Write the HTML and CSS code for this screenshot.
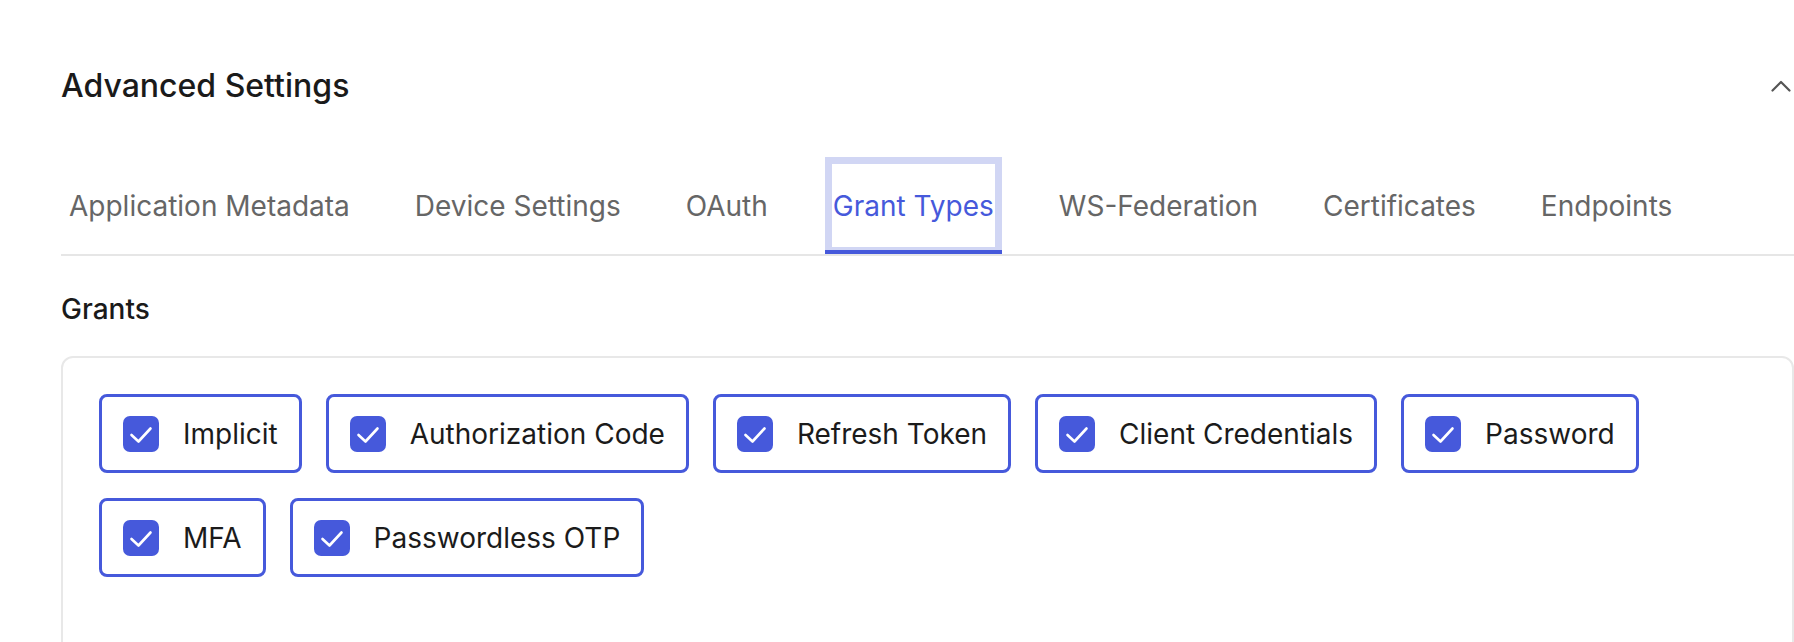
FILE: index.html
```html
<!DOCTYPE html>
<html lang="en">
<head>
<meta charset="utf-8">
<title>Advanced Settings</title>
<link rel="stylesheet" href="styles.css">
</head>
<body>
<main class="page">
  <header class="section-header">
    <h2 class="section-title">Advanced Settings</h2>
    <button class="collapse-btn" type="button" aria-label="Collapse">
      <svg width="20" height="12" viewBox="0 0 20 12" aria-hidden="true">
        <path d="M1.5 10.5 L10 2 L18.5 10.5" fill="none" stroke="#555" stroke-width="2.2" stroke-linecap="round" stroke-linejoin="round"/>
      </svg>
    </button>
  </header>

  <nav class="tabs">
    <span class="tab">Application Metadata</span>
    <span class="tab">Device Settings</span>
    <span class="tab">OAuth</span>
    <span class="tab tab-active">Grant Types</span>
    <span class="tab">WS-Federation</span>
    <span class="tab">Certificates</span>
    <span class="tab">Endpoints</span>
  </nav>

  <h3 class="group-label">Grants</h3>

  <section class="card">
    <div class="chips">
      <label class="chip"><span class="box"><svg viewBox="0 0 36 36"><path d="M8.5 19 L15.5 25.5 L27.5 12.5"/></svg></span><span class="chip-text">Implicit</span></label>
      <label class="chip"><span class="box"><svg viewBox="0 0 36 36"><path d="M8.5 19 L15.5 25.5 L27.5 12.5"/></svg></span><span class="chip-text">Authorization Code</span></label>
      <label class="chip"><span class="box"><svg viewBox="0 0 36 36"><path d="M8.5 19 L15.5 25.5 L27.5 12.5"/></svg></span><span class="chip-text">Refresh Token</span></label>
      <label class="chip"><span class="box"><svg viewBox="0 0 36 36"><path d="M8.5 19 L15.5 25.5 L27.5 12.5"/></svg></span><span class="chip-text">Client Credentials</span></label>
      <label class="chip"><span class="box"><svg viewBox="0 0 36 36"><path d="M8.5 19 L15.5 25.5 L27.5 12.5"/></svg></span><span class="chip-text">Password</span></label>
      <label class="chip"><span class="box"><svg viewBox="0 0 36 36"><path d="M8.5 19 L15.5 25.5 L27.5 12.5"/></svg></span><span class="chip-text">MFA</span></label>
      <label class="chip"><span class="box"><svg viewBox="0 0 36 36"><path d="M8.5 19 L15.5 25.5 L27.5 12.5"/></svg></span><span class="chip-text">Passwordless OTP</span></label>
    </div>
  </section>
</main>
</body>
</html>
```

FILE: styles.css
```css
* {
  box-sizing: border-box;
}

html, body {
  margin: 0;
  padding: 0;
  background: #ffffff;
  overflow: hidden;
}

body {
  font-family: Inter, "Noto Sans", "Liberation Sans", sans-serif;
  color: #1b1b1b;
}

.page {
  padding: 68px 0 0 61px;
}

.section-header {
  display: flex;
  align-items: center;
  justify-content: space-between;
  height: 36px;
}

.section-title {
  margin: 0;
  font-size: 32px;
  line-height: 36px;
  font-weight: 500;
  color: #1a1a1a;
}

.collapse-btn {
  display: flex;
  align-items: center;
  justify-content: center;
  width: 20px;
  height: 12px;
  margin-right: 3px;
  padding: 0;
  border: 0;
  background: none;
}

.collapse-btn svg {
  display: block;
}

.tabs {
  display: flex;
  gap: 49px;
  margin-top: 53px;
  border-bottom: 2px solid #e6e6e6;
}

.tab {
  display: block;
  padding: 32px 8px 27px;
  font-size: 28px;
  line-height: 34px;
  font-weight: 400;
  color: #666666;
  border-bottom: 4px solid transparent;
  white-space: nowrap;
}

.tab-active {
  color: #4659db;
  border-bottom-color: #4659db;
  box-shadow: inset 7px 7px 0 0 #d1d6f4, inset -7px -3px 0 0 #d1d6f4;
}

.group-label {
  margin: 37px 0 0;
  font-size: 28px;
  line-height: 32px;
  font-weight: 500;
  color: #1a1a1a;
}

.card {
  margin-top: 31px;
  min-height: 320px;
  padding: 36px;
  border: 2px solid #e8e8e8;
  border-radius: 12px;
}

.chips {
  display: flex;
  flex-wrap: wrap;
  gap: 25px 24px;
}

.chip {
  display: flex;
  align-items: center;
  gap: 24px;
  height: 79px;
  padding: 0 21px 0 21px;
  border: 3px solid #4659db;
  border-radius: 8px;
  background: #ffffff;
}

.box {
  display: block;
  width: 36px;
  height: 36px;
  border-radius: 7px;
  background: #4659db;
}

.box svg {
  display: block;
  width: 36px;
  height: 36px;
}

.box path {
  fill: none;
  stroke: #ffffff;
  stroke-width: 2.6;
  stroke-linecap: round;
  stroke-linejoin: round;
}

.chip-text {
  font-size: 28px;
  line-height: 34px;
  color: #1b1b1b;
  white-space: nowrap;
}
```
